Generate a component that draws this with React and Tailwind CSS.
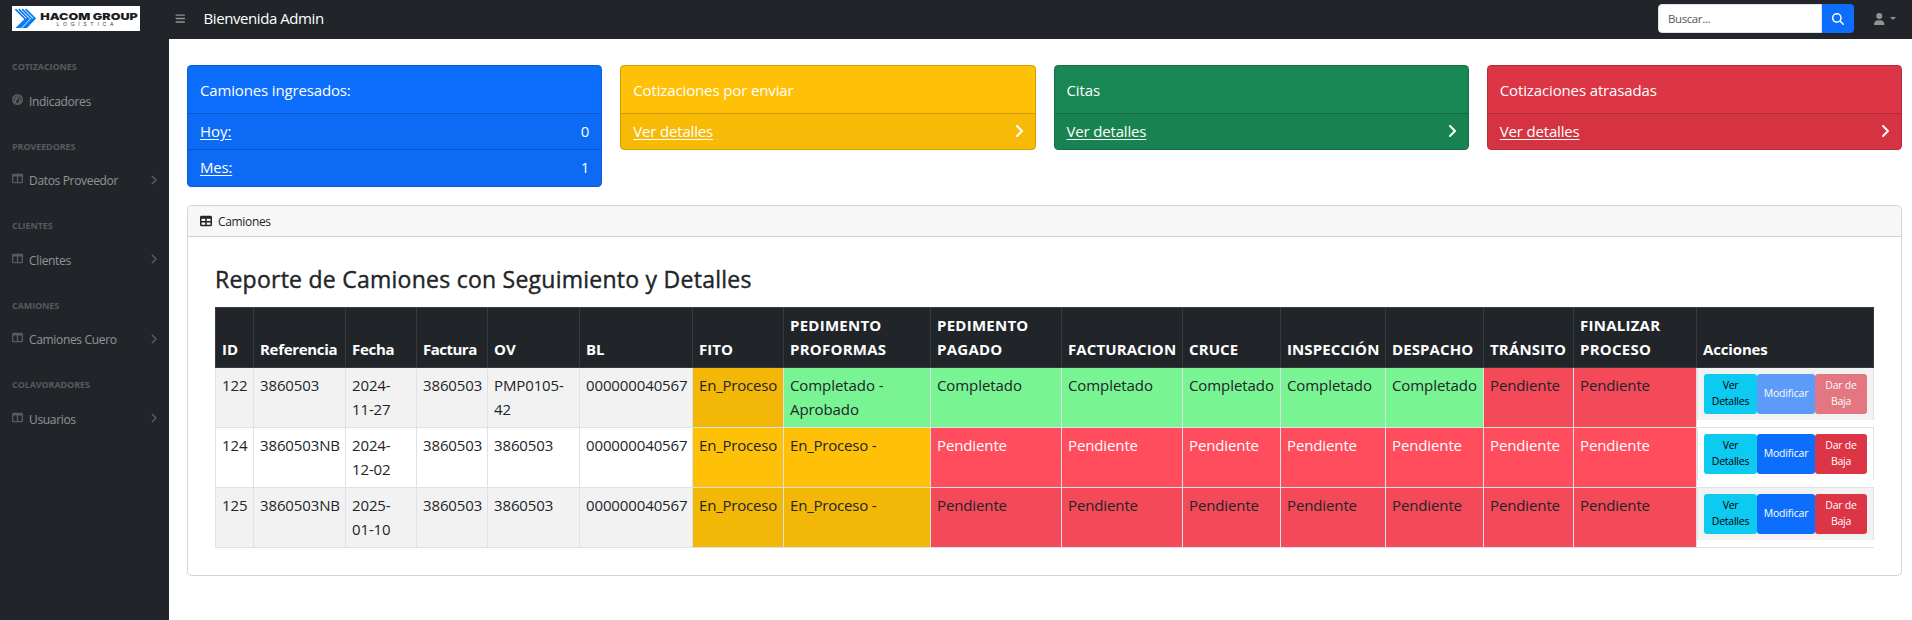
import {
  FaAngleRight,
  FaBars,
  FaGaugeHigh,
  FaMagnifyingGlass,
  FaTable,
  FaTableColumns,
  FaUser,
} from "react-icons/fa6";

const menu = [
  { title: "COTIZACIONES", label: "Indicadores", icon: FaGaugeHigh },
  { title: "PROVEEDORES", label: "Datos Proveedor", icon: FaTableColumns, more: true },
  { title: "CLIENTES", label: "Clientes", icon: FaTableColumns, more: true },
  { title: "CAMIONES", label: "Camiones Cuero", icon: FaTableColumns, more: true },
  { title: "COLAVORADORES", label: "Usuarios", icon: FaTableColumns, more: true },
];

const cards = [
  { title: "Cotizaciones por enviar", tone: "bg-[#ffc107]" },
  { title: "Citas", tone: "bg-[#198754]" },
  { title: "Cotizaciones atrasadas", tone: "bg-[#dc3545]" },
];

const columns = [
  { label: "ID", width: "w-[38px]" },
  { label: "Referencia", width: "w-[92px]", track: "tracking-[-0.3px]" },
  { label: "Fecha", width: "w-[71px]", track: "tracking-[-0.3px]" },
  { label: "Factura", width: "w-[71px]", track: "tracking-[-0.5px]" },
  { label: "OV", width: "w-[92px]" },
  { label: "BL", width: "w-[113px]" },
  { label: "FITO", width: "w-[91px]" },
  { label: "PEDIMENTO PROFORMAS", width: "w-[147px]", track: "tracking-[0.25px]" },
  { label: "PEDIMENTO PAGADO", width: "w-[131px]", track: "tracking-[0.25px]" },
  { label: "FACTURACION", width: "w-[121px]", track: "tracking-[0.1px]" },
  { label: "CRUCE", width: "w-[98px]", track: "tracking-[0.1px]" },
  { label: "INSPECCIÓN", width: "w-[105px]", track: "tracking-[0.1px]" },
  { label: "DESPACHO", width: "w-[98px]", track: "tracking-[0.1px]" },
  { label: "TRÁNSITO", width: "w-[90px]", track: "tracking-[0.15px]" },
  { label: "FINALIZAR PROCESO", width: "w-[123px]", track: "tracking-[0.25px]" },
  { label: "Acciones", width: "w-[178px]", track: "tracking-[-0.15px]" },
];

const rows = [
  {
    data: ["122", "3860503", "2024-11-27", "3860503", "PMP0105-42", "000000040567"],
    status: [
      "En_Proceso",
      "Completado - Aprobado",
      "Completado",
      "Completado",
      "Completado",
      "Completado",
      "Completado",
      "Pendiente",
      "Pendiente",
    ],
    striped: true,
    disabled: true,
  },
  {
    data: ["124", "3860503NB", "2024-12-02", "3860503", "3860503", "000000040567"],
    status: ["En_Proceso", "En_Proceso -", ...Array(7).fill("Pendiente")],
  },
  {
    data: ["125", "3860503NB", "2025-01-10", "3860503", "3860503", "000000040567"],
    status: ["En_Proceso", "En_Proceso -", ...Array(7).fill("Pendiente")],
    striped: true,
  },
];

function statusTone(status, striped) {
  if (status.startsWith("Completado")) return "bg-[#79f492] tracking-[-0.08px]";
  if (status.startsWith("En_Proceso"))
    return striped ? "bg-[#f2b707] tracking-[-0.2px]" : "bg-[#ffc107] tracking-[-0.2px]";
  return striped
    ? "bg-[#f34958] tracking-[-0.12px]"
    : "bg-[#ff4d5d] text-white tracking-[-0.12px]";
}

function Logo() {
  return (
    <svg className="h-[25px] w-32 shrink-0 bg-white" viewBox="0 0 128 25">
      <path d="M3.500 22L13.300 12.300H24.300L15 22Z" fill="#0b78f5" />
      <g stroke="#0b78f5" strokeWidth="1.700" fill="none">
        <path d="M3.400 3.200l9.800 9.800" />
        <path d="M6.800 3.200l9.800 9.800" />
        <path d="M10.200 3.200l9.800 9.800" />
        <path d="M13.600 3.200l9.800 9.600" />
      </g>
      <path d="M9.200 22.500l9.700-10.200" stroke="#fff" strokeWidth="0.900" />
      <text
        x="28.300"
        y="13.800"
        fontFamily="Inter, sans-serif"
        fontWeight="900"
        fontSize="9.400"
        textLength="97.500"
        lengthAdjust="spacingAndGlyphs"
        fill="#1c1c1e"
      >
        HACOM GROUP
      </text>
      <text
        x="44.500"
        y="20.300"
        fontFamily="Inter, sans-serif"
        fontSize="5.200"
        textLength="57"
        fill="#444"
      >
        LOGÍSTICA
      </text>
    </svg>
  );
}

function Sidebar() {
  return (
    <aside className="w-[169px] shrink-0 bg-[#212529]">
      {menu.map(({ title, label, icon: Icon, more }) => (
        <div key={title} className="px-3">
          <div className="pt-[21px] pb-[9px] text-[9px] leading-[13.5px] font-bold tracking-[-0.1px] text-white/25">
            {title}
          </div>
          <div className="flex h-9 items-center text-xs text-white/50">
            <Icon className="mb-[3px] size-[11px] shrink-0 text-white/25" />
            <span className="ml-1.5 pt-0.5 tracking-[-0.33px]">{label}</span>
            {more && <FaAngleRight className="mb-px ml-auto h-3 w-[7.5px] text-white/25" />}
          </div>
        </div>
      ))}
    </aside>
  );
}

function Topbar() {
  return (
    <header className="flex h-[39px] shrink-0 items-center bg-[#212529]">
      <div className="flex w-[169px] shrink-0 pb-0.5 pl-3">
        <Logo />
      </div>
      <FaBars className="mb-[3px] ml-[6px] h-[11px] w-[10.500px] text-white/50" />
      <span className="ml-[18px] pb-0.5 tracking-[-0.42px] text-white">Bienvenida Admin</span>
      <div className="mr-5 mb-0.5 ml-auto flex h-[29px]">
        <div className="flex w-[164px] items-center rounded-l-[4px] border border-[#dee2e6] bg-white pl-[9px] text-[11.500px] tracking-[-0.4px] text-[#55595d]">
          Buscar...
        </div>
        <div className="flex w-8 items-center justify-center rounded-r-[4px] bg-[#0d6efd]">
          <FaMagnifyingGlass className="size-3 text-white" />
        </div>
      </div>
      <div className="mr-4 flex items-center gap-[5.500px] text-white/50">
        <FaUser className="mb-px h-3 w-[10.500px]" />
        <svg className="mb-0.5 h-[3px] w-1.5" viewBox="0 0 6 3" fill="currentColor">
          <path d="M0 0h6L3 3z" />
        </svg>
      </div>
    </header>
  );
}

function SummaryCards() {
  return (
    <div className="grid grid-cols-4 items-start gap-[18px] text-white">
      <div className="rounded-[4.500px] border border-black/17.5 bg-[#0d6efd]">
        <div className="h-[47px] px-3 pt-[11.500px] leading-6 tracking-[-0.15px]">
          Camiones ingresados:
        </div>
        <div className="flex h-9 justify-between border-t border-black/17.5 bg-black/3 px-3 pt-[5.400px] leading-6">
          <span className="underline underline-offset-2">Hoy:</span>
          <span>0</span>
        </div>
        <div className="flex h-[37px] justify-between border-t border-black/17.5 bg-black/3 px-3 pt-[5.400px] leading-6">
          <span className="tracking-[-0.2px] underline underline-offset-2">Mes:</span>
          <span>1</span>
        </div>
      </div>
      {cards.map(({ title, tone }) => (
        <div key={title} className={`rounded-[4.500px] border border-black/17.5 ${tone}`}>
          <div className="h-[47px] px-3 pt-[11.500px] leading-6 tracking-[-0.13px]">{title}</div>
          <div className="flex h-9 justify-between border-t border-black/17.5 bg-black/3 px-3 pt-[5.400px] leading-6">
            <span className="tracking-[-0.17px] underline underline-offset-2">Ver detalles</span>
            <FaAngleRight className="mt-1 -mr-px h-4 w-2.5" />
          </div>
        </div>
      ))}
    </div>
  );
}

function Actions({ striped, disabled }) {
  const fade = disabled ? "opacity-65" : "";
  return (
    <div
      className={`flex h-[52px] items-start border-x border-[#dee2e6] p-1.5 text-center text-[10.500px] leading-4 tracking-[-0.25px] ${
        striped ? "bg-[#f2f2f2]" : "bg-white"
      }`}
    >
      <button className="h-10 w-[53px] rounded-[3px] bg-[#0dcaf0] px-1.5 pb-0.5 text-black">
        Ver Detalles
      </button>
      <button
        className={`h-10 w-[58px] rounded-[3px] bg-[#0d6efd] pb-0.5 tracking-[-0.18px] text-white ${fade}`}
      >
        Modificar
      </button>
      <button className={`h-10 w-[52px] rounded-[3px] bg-[#dc3545] px-2 pb-0.5 text-white ${fade}`}>
        Dar de Baja
      </button>
    </div>
  );
}

function TrucksTable() {
  return (
    <table className="w-[1659px] table-fixed border-separate border-spacing-0 text-left leading-6 text-[#212529]">
      <thead>
        <tr className="h-[61px]">
          {columns.map(({ label, width, track = "" }) => (
            <th
              key={label}
              className={`border-y border-l border-[#373b3e] bg-[#212529] px-1.5 pb-1.5 align-bottom font-bold text-white last:border-r ${width} ${track}`}
            >
              {label}
            </th>
          ))}
        </tr>
      </thead>
      <tbody>
        {rows.map(({ data, status, striped, disabled }) => (
          <tr key={data[0]} className="h-[60px]">
            {data.map((value, i) => (
              <td
                key={i}
                className={`border-b border-l border-[#dee2e6] pt-[5px] pr-1 pl-1.5 align-top tracking-[-0.12px] ${
                  striped ? "bg-[#f2f2f2]" : ""
                }`}
              >
                {value}
              </td>
            ))}
            {status.map((value, i) => (
              <td
                key={i}
                className={`border-b border-l border-[#dee2e6] pt-[5px] pr-1 pl-1.5 align-top ${statusTone(value, striped)}`}
              >
                {value}
              </td>
            ))}
            <td className="border-b border-l border-[#dee2e6] p-0 align-top">
              <Actions striped={striped} disabled={disabled} />
            </td>
          </tr>
        ))}
      </tbody>
    </table>
  );
}

export default function App() {
  return (
    <div className="flex h-[620px] flex-col overflow-hidden bg-white font-['Open_Sans',sans-serif] text-[15px]">
      <Topbar />
      <div className="flex grow">
        <Sidebar />
        <main className="grow pt-[26px] pr-[10px] pl-[18px]">
          <SummaryCards />
          <section className="mt-[18px] rounded-[4.500px] border border-[#d3d4d4]">
            <div className="flex h-[31px] items-center rounded-t-[4px] border-b border-[#cfcfd0] bg-[#f7f7f7] pl-3 text-xs text-[#212529]">
              <FaTable className="size-3" />
              <span className="ml-1.5 pt-px tracking-[-0.33px]">Camiones</span>
            </div>
            <div className="px-[27px] pb-[27px]">
              <h4 className="h-[70px] pt-[27.500px] text-[23px] leading-[29px] font-medium tracking-[0.25px] text-[#212529] [-webkit-text-stroke:0.4px_#212529]">
                Reporte de Camiones con Seguimiento y Detalles
              </h4>
              <TrucksTable />
            </div>
          </section>
        </main>
      </div>
    </div>
  );
}
